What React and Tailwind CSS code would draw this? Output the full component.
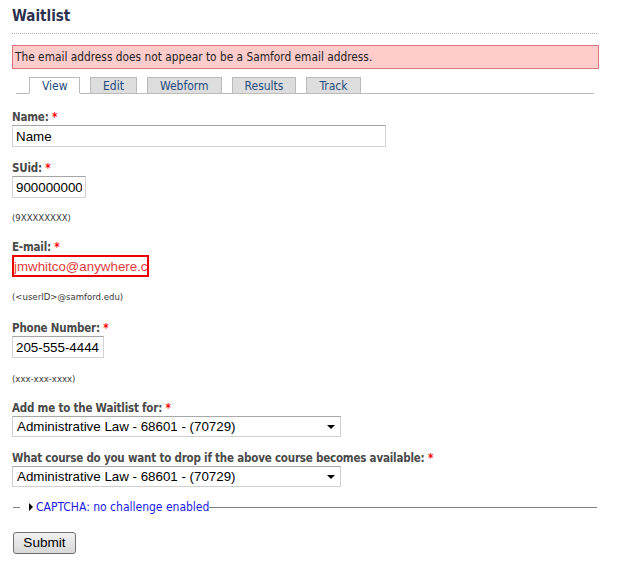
import React, { useState } from 'react';

const courses = [
  "Administrative Law - 68601 - (70729)",
  "Business Associations - 68602 - (70731)",
  "Evidence - 68610 - (70744)",
];

const tabs = ["View", "Edit", "Webform", "Results", "Track"];

const ui = { fontFamily: '"DejaVu Sans Condensed", "DejaVu Sans", sans-serif' };
const arial = { fontFamily: '"Liberation Sans", Arial, sans-serif' };

const Required = () => <span className="text-[#ff0000]">*</span>;

const Label = ({ children, className = "" }) => (
  <label className={`block text-[11.5px] tracking-[-0.2px] leading-[14px] font-bold text-[#4a4a4a] ${className}`}>
    {children} <Required />
  </label>
);

const Hint = ({ children, className = "" }) => (
  <div className={`text-[9.5px] leading-[12px] text-[#3a3a3a] ${className}`}>{children}</div>
);

const Dropdown = ({ value, onChange, className = "" }) => (
  <div className={`relative w-[329px] ${className}`}>
    <select
      value={value}
      onChange={(e) => onChange(e.target.value)}
      style={arial}
      className="block w-full h-[21px] appearance-none bg-white border border-[#d0d0d0] border-t-[#a8a8a8] pl-[4px] pr-[20px] text-[13.33px] leading-[18px] text-black outline-none"
    >
      {courses.map((c) => (
        <option key={c}>{c}</option>
      ))}
    </select>
    <span className="pointer-events-none absolute right-[6px] top-[9px] w-0 h-0 border-l-[4px] border-r-[4px] border-t-[4px] border-l-transparent border-r-transparent border-t-black" />
  </div>
);

export default function App() {
  const [name, setName] = useState('Name');
  const [suid, setSuid] = useState('900000000');
  const [email, setEmail] = useState('jmwhitco@anywhere.com');
  const [phone, setPhone] = useState('205-555-4444');
  const [waitFor, setWaitFor] = useState(courses[0]);
  const [drop, setDrop] = useState(courses[0]);

  const inputCls = "block h-[22px] bg-white border border-[#d4d4d4] border-t-[#a5a5a5] px-[3px] text-[13.33px] text-black outline-none";

  return (
    <div style={ui} className="bg-white min-h-screen pl-[12px] pt-[6px] w-[598px]">
      <h1 className="text-[15px] leading-[20px] font-bold text-[#2d3050] pb-[7px] border-b border-dotted border-[#a9a9c4] w-[585px]">
        Waitlist
      </h1>

      <div className="mt-[11px] w-[587px] h-[24px] bg-[#ffcccc] border border-[#dd7777] pl-[2px] text-[11.8px] leading-[22px] text-[#222]">
        The email address does not appear to be a Samford email address.
      </div>

      {/* tab bar */}
      <div className="mt-[8px] ml-[4px] w-[578px] flex gap-[10px] pl-[13px] border-b border-[#bbbbbb]">
        {tabs.map((t, i) => (
          <a
            key={t}
            href="#"
            className={`block h-[17px] px-[12px] -mb-px border border-[#bbbbbb] text-[12px] leading-[16px] text-[#1d4b7e] ${
              i === 0 ? "bg-white border-b-white w-[51px] text-center px-0" : "bg-[#dddddd]"
            }`}
          >
            {t}
          </a>
        ))}
      </div>

      <form onSubmit={(e) => e.preventDefault()}>
        <Label className="mt-[16px]">Name:</Label>
        <input style={arial} className={`${inputCls} mt-px w-[374px]`} value={name} onChange={(e) => setName(e.target.value)} />

        <Label className="mt-[14px]">SUid:</Label>
        <input style={arial} className={`${inputCls} mt-px w-[74px]`} value={suid} onChange={(e) => setSuid(e.target.value)} />
        <Hint className="mt-[14px]">(9XXXXXXXX)</Hint>

        <Label className="mt-[16px]">E-mail:</Label>
        <input
          style={arial}
          className="block mt-px w-[137px] h-[22px] bg-white border-2 border-[#ee0000] px-0 text-[13.33px] text-[#e23c3c] outline-none"
          value={email}
          onChange={(e) => setEmail(e.target.value)}
        />
        <Hint className="mt-[14px]">(&lt;userID&gt;@samford.edu)</Hint>

        <Label className="mt-[18px]">Phone Number:</Label>
        <input style={arial} className={`${inputCls} mt-px w-[92px]`} value={phone} onChange={(e) => setPhone(e.target.value)} />
        <Hint className="mt-[15px]">(xxx-xxx-xxxx)</Hint>

        <Label className="mt-[16px]">Add me to the Waitlist for:</Label>
        <Dropdown className="mt-[1px]" value={waitFor} onChange={setWaitFor} />

        <Label className="mt-[14px]">What course do you want to drop if the above course becomes available:</Label>
        <Dropdown className="mt-[1px]" value={drop} onChange={setDrop} />

        {/* collapsed captcha fieldset */}
        <div className="mt-[13px] w-[585px] flex items-center h-[14px]">
          <span className="w-[7px] ml-px h-px bg-[#808080]" />
          <span className="ml-[9px] mr-[3px] w-0 h-0 border-t-[4px] border-b-[4px] border-l-[4px] border-t-transparent border-b-transparent border-l-black" />
          <a href="#" className="text-[12px] leading-[14px] text-[#1a1ae6]">
            CAPTCHA: no challenge enabled
          </a>
          <span className="flex-1 h-px bg-[#808080]" />
        </div>

        <button
          type="submit"
          style={arial}
          className="mt-[18px] ml-px w-[63px] h-[22px] rounded-[3px] border border-[#707070] bg-gradient-to-b from-[#f2f2f2] to-[#d8d8d8] text-[13.6px] leading-[20px] text-black"
        >
          Submit
        </button>
      </form>
    </div>
  );
}
